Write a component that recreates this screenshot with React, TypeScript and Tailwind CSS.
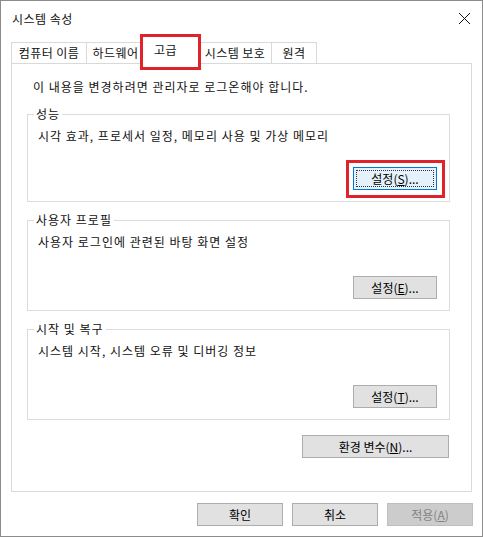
import React from 'react';

const font = "[font-family:'Noto_Sans_CJK_KR','Malgun_Gothic',sans-serif]";

function Btn({
  children,
  w,
  focused,
  disabled,
}: {
  children: React.ReactNode;
  w: string;
  focused?: boolean;
  disabled?: boolean;
}) {
  let tone = 'border-[#adadad] bg-[#e1e1e1] text-black';
  if (focused) tone = 'border-[#0078d7] bg-[#e5f1fb] text-black';
  if (disabled) tone = 'border-[#bfbfbf] bg-[#cccccc] text-[#838383]';
  return (
    <button
      type="button"
      className={`relative flex h-[23px] ${w} items-center justify-center border ${tone} text-[12px] leading-none`}
    >
      {focused && (
        <span className="absolute inset-[2px] border border-dotted border-[#333]" />
      )}
      {children}
    </button>
  );
}

function Group({
  title,
  desc,
  h,
  children,
}: {
  title: string;
  desc: string;
  h: string;
  children: React.ReactNode;
}) {
  return (
    <div className={`relative flex ${h} w-[423px] flex-col border border-[#dcdcdc] pl-[10px] pr-[12px] pt-[13px]`}>
      <span className="absolute -top-[9px] left-[6px] bg-white px-[2px] leading-[16px] tracking-[1px]">{title}</span>
      <p className="leading-[16px] tracking-[1px]">{desc}</p>
      <div className="mt-auto mb-[11px] flex justify-end">{children}</div>
    </div>
  );
}

export default function App() {
  return (
    <div className={`${font} flex h-[537px] w-[483px] flex-col border border-[#8c8c8c] bg-white text-[12px] text-[#111]`}>
      {/* 제목 표시줄 */}
      <div className="flex h-[35px] items-center justify-between pl-[11px] pr-[11px]">
        <span className="leading-[16px] tracking-[0.5px]">시스템 속성</span>
        <svg width="13" height="13" viewBox="0 0 13 13">
          <path d="M1 1 L12 12 M12 1 L1 12" stroke="#111" strokeWidth="1" />
        </svg>
      </div>

      {/* 탭 */}
      <div className="ml-[10px] flex h-[27px] items-end">
        <div className="flex h-[21px] w-[75px] items-center justify-center border-l border-t border-[#d9d9d9] leading-[16px] tracking-[0.4px]">
          컴퓨터 이름
        </div>
        <div className="flex h-[21px] w-[58px] items-center justify-center border-l border-t border-[#d9d9d9] leading-[16px] tracking-[0.4px]">
          하드웨어
        </div>
        <div className="relative z-10 -mb-px -ml-[2px] -mr-px h-[28px] w-[57px] border border-b-0 border-[#d9d9d9] bg-white pl-[11px] pt-[5px] leading-[16px] tracking-[0.4px]">
          고급
          <span className="absolute -left-[3px] -right-[3px] -top-[3px] -bottom-[6px] border-[3px] border-[#e0232b]" />
        </div>
        <div className="flex h-[21px] w-[73px] items-center justify-center border-l border-t border-[#d9d9d9] leading-[16px] tracking-[0.4px]">
          시스템 보호
        </div>
        <div className="flex h-[21px] w-[46px] items-center justify-center border-x border-t border-[#d9d9d9] leading-[16px] tracking-[0.4px]">
          원격
        </div>
      </div>

      {/* 고급 탭 내용 */}
      <div className="ml-[10px] flex h-[429px] w-[461px] flex-col border border-[#d9d9d9] pl-[15px] pt-[15px]">
        <p className="pl-[6px] leading-[16px] tracking-[1px]">이 내용을 변경하려면 관리자로 로그온해야 합니다.</p>

        <div className="mt-[19px] flex flex-col gap-[18px]">
          <Group title="성능" desc="시각 효과, 프로세서 일정, 메모리 사용 및 가상 메모리" h="h-[88px]">
            <div className="relative">
              <Btn w="w-[84px]" focused>
                설정(<u>S</u>)...
              </Btn>
              <span className="absolute -left-[7px] -right-[8px] -top-[7px] -bottom-[8px] border-[3px] border-[#e0232b]" />
            </div>
          </Group>
          <Group title="사용자 프로필" desc="사용자 로그인에 관련된 바탕 화면 설정" h="h-[91px]">
            <Btn w="w-[84px]">
              설정(<u>E</u>)...
            </Btn>
          </Group>
          <Group title="시작 및 복구" desc="시스템 시작, 시스템 오류 및 디버깅 정보" h="h-[91px]">
            <Btn w="w-[84px]">
              설정(<u>T</u>)...
            </Btn>
          </Group>
        </div>

        <div className="mt-[15px] flex w-[423px] justify-end pr-[1px]">
          <Btn w="w-[147px]">
            환경 변수(<u>N</u>)...
          </Btn>
        </div>
      </div>

      {/* 하단 버튼 */}
      <div className="mt-[11px] flex justify-end gap-[9px] pr-[9px]">
        <Btn w="w-[86px]">확인</Btn>
        <Btn w="w-[86px]">취소</Btn>
        <Btn w="w-[86px]" disabled>
          적용(<u>A</u>)
        </Btn>
      </div>
    </div>
  );
}
